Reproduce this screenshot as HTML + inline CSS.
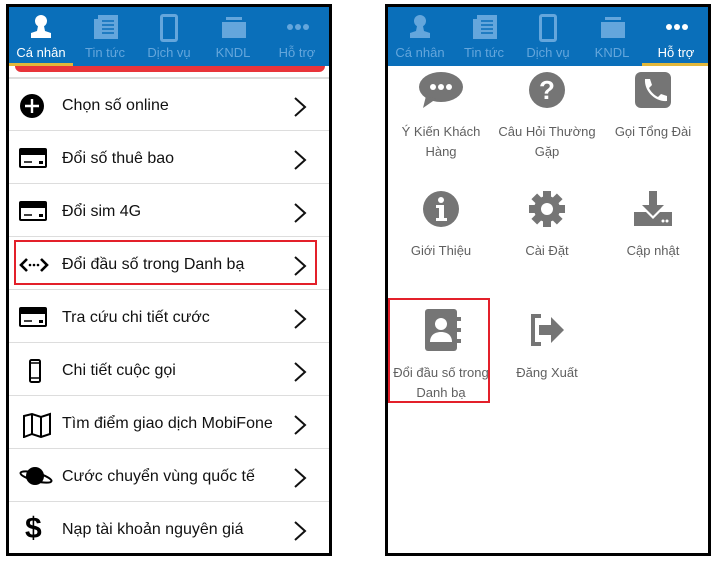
<!DOCTYPE html>
<html><head><meta charset="utf-8"><style>
*{margin:0;padding:0;box-sizing:border-box}
body{width:719px;height:561px;background:#fff;position:relative;overflow:hidden;font-family:"Liberation Sans",sans-serif}
.ph{position:absolute;top:4px;width:326px;height:552px;border:3px solid #000;background:#fff;overflow:hidden}
.hd{position:absolute;left:0;top:0;width:100%;height:59px;background:#0a6fba}
.tab{position:absolute;top:0;width:64px;height:59px;text-align:center;color:#64a6dc;font-size:13px}
.tab svg{position:absolute;left:20px;top:6px}
.tab span{position:absolute;left:0;right:0;top:38px}
.tab.on{color:#fff}
.ul{position:absolute;top:56px;height:3px;background:#e2b73a}
.row{position:absolute;left:0;width:100%;height:53px;border-bottom:1.5px solid #ddd}
.row .t{position:absolute;left:53px;top:19px;font-size:16px;color:#111}
.row .ic{position:absolute;left:10px;top:13px}
.row .ch{position:absolute;left:284px;top:18px}
.cell{position:absolute;width:106px;text-align:center;color:#606060;font-size:13px;line-height:20px}
.cell svg{display:block;margin:0 auto}
.red{position:absolute;border:2.5px solid #e3202a}
</style></head><body>

<div class="ph" style="left:6px">
 <div class="hd">
  <div class="tab on" style="left:0"><svg width="24" height="28" viewBox="0 0 24 28"><circle cx="12" cy="8" r="6" fill="#fff"/><path d="M9 13h6l1 5 6 2v5H2v-5l6-2z" fill="#fff"/></svg><span>Cá nhân</span></div>
  <div class="tab" style="left:64px"><svg width="26" height="28" viewBox="0 0 26 28"><rect x="5" y="2" width="20" height="24" fill="#64a6dc"/><rect x="1" y="6" width="4" height="20" fill="#64a6dc"/><path d="M9 8h12M9 12h12M9 16h12M9 20h12" stroke="#0a6fba" stroke-width="1.6"/></svg><span>Tin tức</span></div>
  <div class="tab" style="left:128px"><svg width="24" height="30" viewBox="0 0 24 30"><rect x="3" y="1" width="18" height="28" rx="3" fill="#64a6dc"/><rect x="6" y="4" width="12" height="22" fill="#0a6fba"/></svg><span>Dịch vụ</span></div>
  <div class="tab" style="left:192px"><svg width="26" height="28" viewBox="0 0 26 28"><rect x="5" y="4" width="16" height="3" fill="#64a6dc"/><path d="M1 9h24v16H1z" fill="#64a6dc"/></svg><span>KNDL</span></div>
  <div class="tab" style="left:256px"><svg width="26" height="28" viewBox="0 0 26 28"><circle cx="5" cy="14" r="3" fill="#64a6dc"/><circle cx="13" cy="14" r="3" fill="#64a6dc"/><circle cx="21" cy="14" r="3" fill="#64a6dc"/></svg><span>Hỗ trợ</span></div>
 </div>
 <div class="ul" style="left:0;width:64px"></div>
 <div style="position:absolute;left:6px;top:59px;width:310px;height:6px;background:#e8343a;border-radius:0 0 8px 8px"></div>
 <div style="position:absolute;left:0;top:70px;width:100%;height:1.5px;background:#ddd"></div>
 <div class="row" style="top:71px"><svg class="ic" style="top:15px" width="26" height="26"><circle cx="13" cy="13" r="12" fill="#000"/><path d="M13 6v14M6 13h14" stroke="#fff" stroke-width="2.4"/></svg><div class="t">Chọn số online</div><svg class="ch" width="14" height="22"><path d="M2 2l10 9-10 9" fill="none" stroke="#111" stroke-width="2"/></svg></div>
 <div class="row" style="top:124px"><svg class="ic" style="top:17px" width="28" height="22"><rect x="0" y="0" width="28" height="20" rx="2" fill="#000"/><rect x="2" y="7" width="24" height="11" fill="#fff"/><path d="M5 14h8" stroke="#000" stroke-width="1.5"/><rect x="20" y="13" width="4" height="3" fill="#000"/></svg><div class="t">Đổi số thuê bao</div><svg class="ch" width="14" height="22"><path d="M2 2l10 9-10 9" fill="none" stroke="#111" stroke-width="2"/></svg></div>
 <div class="row" style="top:177px"><svg class="ic" style="top:17px" width="28" height="22"><rect x="0" y="0" width="28" height="20" rx="2" fill="#000"/><rect x="2" y="7" width="24" height="11" fill="#fff"/><path d="M5 14h8" stroke="#000" stroke-width="1.5"/><rect x="20" y="13" width="4" height="3" fill="#000"/></svg><div class="t">Đổi sim 4G</div><svg class="ch" width="14" height="22"><path d="M2 2l10 9-10 9" fill="none" stroke="#111" stroke-width="2"/></svg></div>
 <div class="row" style="top:230px"><svg class="ic" style="top:20px" width="30" height="16"><path d="M8 2L2 8l6 6M22 2l6 6-6 6" fill="none" stroke="#000" stroke-width="2.6"/><circle cx="11" cy="8" r="1.3"/><circle cx="15" cy="8" r="1.3"/><circle cx="19" cy="8" r="1.3"/></svg><div class="t">Đổi đầu số trong Danh bạ</div><svg class="ch" width="14" height="22"><path d="M2 2l10 9-10 9" fill="none" stroke="#111" stroke-width="2"/></svg></div>
 <div class="row" style="top:283px"><svg class="ic" style="top:17px" width="28" height="22"><rect x="0" y="0" width="28" height="20" rx="2" fill="#000"/><rect x="2" y="7" width="24" height="11" fill="#fff"/><path d="M5 14h8" stroke="#000" stroke-width="1.5"/><rect x="20" y="13" width="4" height="3" fill="#000"/></svg><div class="t">Tra cứu chi tiết cước</div><svg class="ch" width="14" height="22"><path d="M2 2l10 9-10 9" fill="none" stroke="#111" stroke-width="2"/></svg></div>
 <div class="row" style="top:336px"><svg class="ic" style="left:20px;top:16px" width="12" height="24"><rect x="1" y="1" width="10" height="22" rx="1.5" fill="none" stroke="#000" stroke-width="2"/><path d="M1 4h10M1 19h10" stroke="#000" stroke-width="1.5"/></svg><div class="t">Chi tiết cuộc gọi</div><svg class="ch" width="14" height="22"><path d="M2 2l10 9-10 9" fill="none" stroke="#111" stroke-width="2"/></svg></div>
 <div class="row" style="top:389px"><svg class="ic" style="left:13px;top:16px" width="30" height="26"><path d="M2 4l8-2 9 3 9-3v20l-9 3-9-3-8 3z M10 2v20M19 5v20" fill="none" stroke="#000" stroke-width="2"/></svg><div class="t">Tìm điểm giao dịch MobiFone</div><svg class="ch" width="14" height="22"><path d="M2 2l10 9-10 9" fill="none" stroke="#111" stroke-width="2"/></svg></div>
 <div class="row" style="top:442px"><svg class="ic" style="left:10px;top:15px" width="34" height="24"><circle cx="16" cy="12" r="9" fill="#000"/><ellipse cx="17" cy="13" rx="16" ry="4" fill="none" stroke="#000" stroke-width="2" transform="rotate(15 17 13)"/></svg><div class="t">Cước chuyển vùng quốc tế</div><svg class="ch" width="14" height="22"><path d="M2 2l10 9-10 9" fill="none" stroke="#111" stroke-width="2"/></svg></div>
 <div class="row" style="top:495px;border-bottom:none"><div style="position:absolute;left:16px;top:10px;font-size:30px;font-weight:bold;color:#000">$</div><div class="t">Nạp tài khoản nguyên giá</div><svg class="ch" width="14" height="22"><path d="M2 2l10 9-10 9" fill="none" stroke="#111" stroke-width="2"/></svg></div>
</div>
<div class="red" style="left:14px;top:240px;width:303px;height:45px"></div>

<div class="ph" style="left:385px">
 <div class="hd">
  <div class="tab" style="left:0"><svg width="24" height="28" viewBox="0 0 24 28"><circle cx="12" cy="8" r="6" fill="#64a6dc"/><path d="M9 13h6l1 5 6 2v5H2v-5l6-2z" fill="#64a6dc"/></svg><span>Cá nhân</span></div>
  <div class="tab" style="left:64px"><svg width="26" height="28" viewBox="0 0 26 28"><rect x="5" y="2" width="20" height="24" fill="#64a6dc"/><rect x="1" y="6" width="4" height="20" fill="#64a6dc"/><path d="M9 8h12M9 12h12M9 16h12M9 20h12" stroke="#0a6fba" stroke-width="1.6"/></svg><span>Tin tức</span></div>
  <div class="tab" style="left:128px"><svg width="24" height="30" viewBox="0 0 24 30"><rect x="3" y="1" width="18" height="28" rx="3" fill="#64a6dc"/><rect x="6" y="4" width="12" height="22" fill="#0a6fba"/></svg><span>Dịch vụ</span></div>
  <div class="tab" style="left:192px"><svg width="26" height="28" viewBox="0 0 26 28"><rect x="5" y="4" width="16" height="3" fill="#64a6dc"/><path d="M1 9h24v16H1z" fill="#64a6dc"/></svg><span>KNDL</span></div>
  <div class="tab on" style="left:256px"><svg width="26" height="28" viewBox="0 0 26 28"><circle cx="5" cy="14" r="3" fill="#fff"/><circle cx="13" cy="14" r="3" fill="#fff"/><circle cx="21" cy="14" r="3" fill="#fff"/></svg><span>Hỗ trợ</span></div>
 </div>
 <div class="ul" style="left:254px;width:66px"></div>

 <div class="cell" style="left:0;top:63px"><svg width="46" height="42" viewBox="0 0 46 42"><ellipse cx="23" cy="17" rx="22" ry="15" fill="#757575"/><path d="M8 26l-3 12 13-9z" fill="#757575"/><circle cx="15" cy="17" r="3" fill="#fff"/><circle cx="23" cy="17" r="3" fill="#fff"/><circle cx="31" cy="17" r="3" fill="#fff"/></svg><div style="margin-top:10px">Ý Kiến Khách<br>Hàng</div></div>
 <div class="cell" style="left:106px;top:63px"><svg width="40" height="42" viewBox="0 0 40 42"><circle cx="20" cy="20" r="18" fill="#757575"/><text x="20" y="29" text-anchor="middle" font-family="Liberation Sans" font-weight="bold" font-size="26" fill="#fff">?</text></svg><div style="margin-top:10px">Câu Hỏi Thường<br>Gặp</div></div>
 <div class="cell" style="left:212px;top:63px"><svg width="40" height="42" viewBox="0 0 40 42"><rect x="2" y="2" width="36" height="36" rx="6" fill="#757575"/><path d="M12 9l5 0 2 6-3 3c2 4 5 7 9 9l3-3 6 2v5c-12 1-23-10-22-22z" fill="#fff"/></svg><div style="margin-top:10px">Gọi Tổng Đài</div></div>

 <div class="cell" style="left:0;top:182px"><svg width="40" height="40" viewBox="0 0 40 40"><circle cx="20" cy="20" r="18" fill="#757575"/><circle cx="20" cy="11" r="3" fill="#fff"/><path d="M15 16h8v13h3v3H15v-3h3v-10h-3z" fill="#fff"/></svg><div style="margin-top:12px">Giới Thiệu</div></div>
 <div class="cell" style="left:106px;top:182px"><svg width="40" height="40" viewBox="0 0 40 40"><g fill="#757575"><circle cx="20" cy="20" r="13"/><rect x="16" y="2" width="8" height="36"/><rect x="16" y="2" width="8" height="36" transform="rotate(45 20 20)"/><rect x="16" y="2" width="8" height="36" transform="rotate(90 20 20)"/><rect x="16" y="2" width="8" height="36" transform="rotate(135 20 20)"/></g><circle cx="20" cy="20" r="6" fill="#fff"/></svg><div style="margin-top:12px">Cài Đặt</div></div>
 <div class="cell" style="left:212px;top:182px"><svg width="42" height="40" viewBox="0 0 42 40"><path d="M17 2h8v14h7L21 27 10 16h7z" fill="#757575"/><path d="M2 23h12l7 7 7-7h12v14H2z" fill="#757575"/><circle cx="31" cy="32" r="1.5" fill="#fff"/><circle cx="35" cy="32" r="1.5" fill="#fff"/></svg><div style="margin-top:12px">Cập nhật</div></div>

 <div class="cell" style="left:0;top:302px"><svg width="44" height="42" viewBox="0 0 44 42"><rect x="6" y="0" width="32" height="42" rx="3" fill="#757575"/><rect x="38" y="8" width="4" height="4" fill="#757575"/><rect x="38" y="19" width="4" height="4" fill="#757575"/><rect x="38" y="30" width="4" height="4" fill="#757575"/><circle cx="22" cy="15" r="6" fill="#fff"/><path d="M11 33c0-7 5-10 11-10s11 3 11 10z" fill="#fff"/></svg><div style="margin-top:12px">Đổi đầu số trong<br>Danh bạ</div></div>
 <div class="cell" style="left:106px;top:302px"><svg width="40" height="42" viewBox="0 0 40 42"><path d="M14 7H6v28h8" fill="none" stroke="#757575" stroke-width="4"/><path d="M12 16h12V8l13 13-13 13v-8H12z" fill="#757575"/></svg><div style="margin-top:12px">Đăng Xuất</div></div>
</div>
<div class="red" style="left:388px;top:298px;width:102px;height:105px"></div>
</body></html>
